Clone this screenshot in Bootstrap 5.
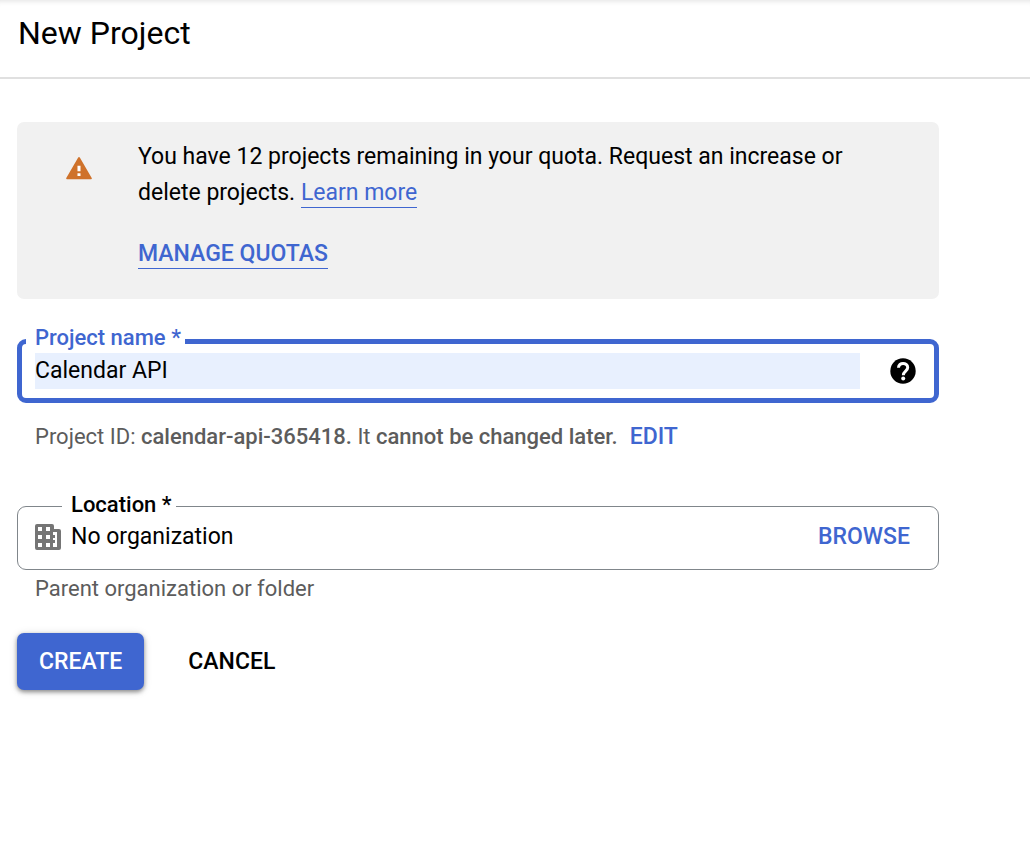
<!DOCTYPE html>
<html lang="en">
<head>
<meta charset="utf-8">
<meta name="viewport" content="width=device-width, initial-scale=1">
<title>New Project</title>
<link href="https://cdn.jsdelivr.net/npm/bootstrap@5.3.0/dist/css/bootstrap.min.css" rel="stylesheet">
<style>
:root { --brand: #3f66d0; --muted-ink: #5c5c5c; }
body { font-family: Roboto, "Liberation Sans", sans-serif; font-size: 23px; line-height: 36px; color: #000; background: #fff; }
.page-head { padding: 12px 18px 22px; border-bottom: 2px solid #e0e0e0; box-shadow: inset 0 6px 6px -6px #d8d8d8; }
.page-head h1 { font-size: 32px; line-height: 43px; font-weight: 400; }
.page-body { max-width: 956px; padding: 43px 17px; }
.quota { background: #f1f1f1; border-radius: 7px; padding: 17px 60px 27px 48px; gap: 45px; }
.quota svg { margin-top: 15px; }
.quota-link { color: var(--brand); text-decoration: none; border-bottom: 1px solid var(--brand); padding-bottom: 1px; }
.quota-action { margin-top: 25px; }
.text-action { font-weight: 500; font-size: 23px; line-height: 36px; color: var(--brand); text-decoration: none; }
.field { border: 1px solid #80868b; border-radius: 9px; padding: 0 28px 14px 17px; }
.field legend { float: none; width: auto; margin: 0 0 0 27px; padding: 0 4px 3px 9px; font-size: 22px; line-height: 23px; font-weight: 500; }
.field-active { border: 5px solid var(--brand); padding: 0 18px 9px 13px; }
.field-active legend { margin-left: -9px; padding-bottom: 6px; line-height: 18px; color: var(--brand); }
.field-active .form-control { font-size: 23px; line-height: 36px; height: 36px; background: #e8f0fe; color: #000; box-shadow: none; }
.name-field { margin-top: 30px; }
.help-btn { margin-left: 30px; }
.hint { font-size: 22px; color: var(--muted-ink); }
.hint strong { font-weight: 500; }
.id-line { padding: 16px 18px 0; gap: 12px; }
.place-field { margin-top: 38px; }
.place-name { margin-left: 10px; }
.place-hint { padding: 1px 18px 0; }
.actions { margin-top: 26px; gap: 22px; }
.btn-form { font-size: 23px; font-weight: 500; line-height: 35px; padding: 11px 22px; border: 0; border-radius: 7px; color: #000; }
.btn-create, .btn-create:hover { background: var(--brand); color: #fff; box-shadow: 0 2px 4px #0006, 0 1px 8px #0002; }
</style>
</head>
<body>
<header class="page-head">
  <h1 class="m-0">New Project</h1>
</header>
<main class="page-body">
  <section class="quota d-flex align-items-start">
    <svg class="flex-shrink-0" width="28" height="28" viewBox="0 0 24 24" aria-hidden="true"><path fill="#cf722b" d="M1.6 21.6h20.8c.6 0 .8-.5.5-1L12.7 3c-.4-.7-1-.7-1.4 0L1.1 20.6c-.3.5 0 1 .5 1z"/><path fill="#fff" d="M10.700 10h2.600v4.800h-2.600zM10.700 16.500h2.600v2.300h-2.600z"/></svg>
    <div>
      <p class="m-0">You have 12 projects remaining in your quota. Request an increase or delete projects. <a class="quota-link" href="#">Learn more</a></p>
      <div class="quota-action"><a class="quota-link text-action" href="#">MANAGE QUOTAS</a></div>
    </div>
  </section>

  <form>
    <fieldset class="field field-active name-field">
      <legend><label for="project-name">Project name *</label></legend>
      <div class="d-flex align-items-center">
        <input class="form-control border-0 rounded-0 p-0 flex-grow-1" id="project-name" type="text" value="Calendar API">
        <button class="btn p-0 border-0 d-flex flex-shrink-0 help-btn" type="button" aria-label="Help">
          <svg width="26" height="26" viewBox="0 0 26 26"><circle cx="13" cy="13" r="12.700" fill="#000"/><path fill="none" stroke="#fff" stroke-width="3" d="M8.500 9.800c0-6 9.200-5.600 9.200-.3 0 3.500-4.400 3.700-4.400 7.800"/><circle cx="13.200" cy="20.500" r="2" fill="#fff"/></svg>
        </button>
      </div>
    </fieldset>
    <div class="hint id-line d-flex flex-wrap">
      <span>Project ID: <strong>calendar-api-365418.</strong> It <strong>cannot be changed later.</strong></span>
      <button class="btn p-0 border-0 text-action" type="button">EDIT</button>
    </div>

    <fieldset class="field place-field">
      <legend>Location *</legend>
      <div class="d-flex align-items-center">
        <svg class="flex-shrink-0" width="26" height="26" viewBox="0 0 26 26" aria-hidden="true"><path fill="#757575" fill-rule="evenodd" d="M2 0h15q2 0 2 2v3h5q2 0 2 2v17q0 2-2 2H2q-2 0-2-2V2Q0 0 2 0zM3 3v4h4V3zM11 3v4h4V3zM3 11v4h4v-4zM11 11v4h4v-4zM3 19v4h4v-4zM11 19v4h4v-4zM18 8v3h2v3h-2v2h2v3h-2v4h4V8z"/></svg>
        <span class="place-name flex-grow-1">No organization</span>
        <button class="btn p-0 border-0 text-action" type="button">BROWSE</button>
      </div>
    </fieldset>
    <div class="hint place-hint">Parent organization or folder</div>

    <div class="d-flex actions">
      <button class="btn btn-form btn-create" type="submit">CREATE</button>
      <button class="btn btn-form" type="button">CANCEL</button>
    </div>
  </form>
</main>
<script src="https://cdn.jsdelivr.net/npm/bootstrap@5.3.0/dist/js/bootstrap.bundle.min.js"></script>
</body>
</html>
